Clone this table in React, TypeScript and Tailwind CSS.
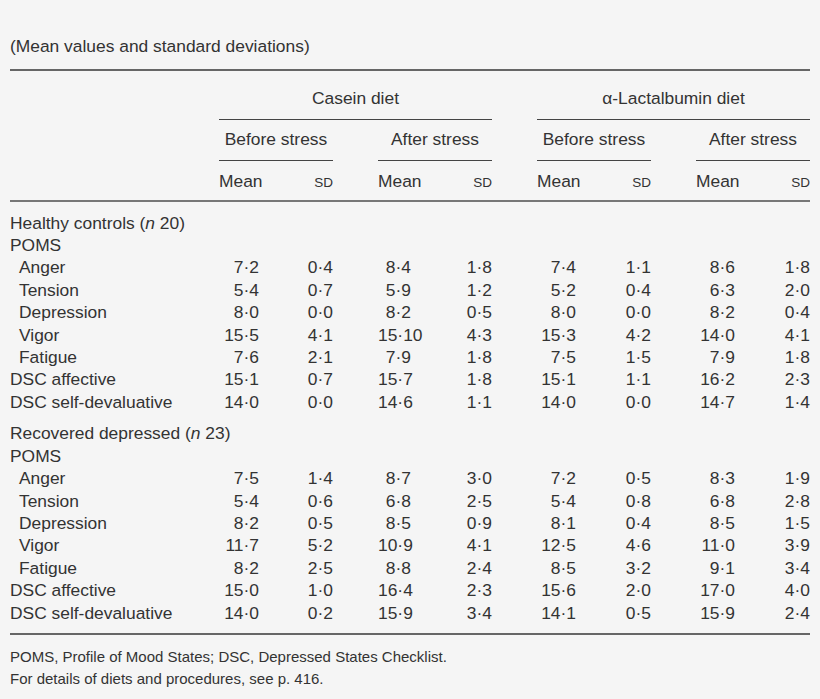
import React from 'react';

type Row = { label: string; indent?: boolean; values?: string[] };

const healthy: Row[] = [
  { label: 'POMS' },
  { label: 'Anger', indent: true, values: ['7·2', '0·4', '8·4', '1·8', '7·4', '1·1', '8·6', '1·8'] },
  { label: 'Tension', indent: true, values: ['5·4', '0·7', '5·9', '1·2', '5·2', '0·4', '6·3', '2·0'] },
  { label: 'Depression', indent: true, values: ['8·0', '0·0', '8·2', '0·5', '8·0', '0·0', '8·2', '0·4'] },
  { label: 'Vigor', indent: true, values: ['15·5', '4·1', '15·10', '4·3', '15·3', '4·2', '14·0', '4·1'] },
  { label: 'Fatigue', indent: true, values: ['7·6', '2·1', '7·9', '1·8', '7·5', '1·5', '7·9', '1·8'] },
  { label: 'DSC affective', values: ['15·1', '0·7', '15·7', '1·8', '15·1', '1·1', '16·2', '2·3'] },
  { label: 'DSC self-devaluative', values: ['14·0', '0·0', '14·6', '1·1', '14·0', '0·0', '14·7', '1·4'] },
];

const recovered: Row[] = [
  { label: 'POMS' },
  { label: 'Anger', indent: true, values: ['7·5', '1·4', '8·7', '3·0', '7·2', '0·5', '8·3', '1·9'] },
  { label: 'Tension', indent: true, values: ['5·4', '0·6', '6·8', '2·5', '5·4', '0·8', '6·8', '2·8'] },
  { label: 'Depression', indent: true, values: ['8·2', '0·5', '8·5', '0·9', '8·1', '0·4', '8·5', '1·5'] },
  { label: 'Vigor', indent: true, values: ['11·7', '5·2', '10·9', '4·1', '12·5', '4·6', '11·0', '3·9'] },
  { label: 'Fatigue', indent: true, values: ['8·2', '2·5', '8·8', '2·4', '8·5', '3·2', '9·1', '3·4'] },
  { label: 'DSC affective', values: ['15·0', '1·0', '16·4', '2·3', '15·6', '2·0', '17·0', '4·0'] },
  { label: 'DSC self-devaluative', values: ['14·0', '0·2', '15·9', '3·4', '14·1', '0·5', '15·9', '2·4'] },
];

// mean column widths per group (right edge of the mean value inside a 114px group)
const meanW = ['w-[40px]', 'w-[33px]', 'w-[39px]', 'w-[39px]'];
const groupGap = ['', 'ml-[45px]', 'ml-[45px]', 'ml-[45px]'];

const Values: React.FC<{ values: string[] }> = ({ values }) => (
  <>
    {[0, 1, 2, 3].map((g) => {
      const mean = values[g * 2];
      const sd = values[g * 2 + 1];
      const wide = mean === '15·10';
      return (
        <div key={g} className={`flex w-[114px] ${groupGap[g]}`}>
          <div className={`${meanW[g]} text-right whitespace-nowrap`}>
            <span className={wide ? 'mr-[-9px]' : ''}>{mean}</span>
          </div>
          <div className="flex-1 text-right">{sd}</div>
        </div>
      );
    })}
  </>
);

const Section: React.FC<{ title: string; n: string; rows: Row[] }> = ({ title, n, rows }) => (
  <div>
    <div>
      {title} (<i>n</i> {n})
    </div>
    {rows.map((r) => (
      <div key={r.label} className="flex">
        <div className={`w-[209px] ${r.indent ? 'pl-[9px]' : ''}`}>{r.label}</div>
        {r.values && <Values values={r.values} />}
      </div>
    ))}
  </div>
);

export default function App() {
  return (
    <div className="w-[820px] h-[699px] bg-[#f5f5f5] text-[#333] px-[10px] pt-[35px] font-['Liberation_Sans',Arial,sans-serif] text-[17.4px] leading-[22.4px]">
      <div>(Mean values and standard deviations)</div>
      <div className="mt-[12px] border-t-2 border-[#666]" />

      {/* header */}
      <div className="flex pt-[16px]">
        <div className="w-[209px]" />
        <div className="w-[273px] text-center">Casein diet</div>
        <div className="w-[273px] ml-[45px] text-center">α-Lactalbumin diet</div>
      </div>
      <div className="flex mt-[9px]">
        <div className="w-[209px]" />
        <div className="w-[273px] border-t border-[#444]" />
        <div className="w-[273px] ml-[45px] border-t border-[#444]" />
      </div>
      <div className="flex mt-[8px]">
        <div className="w-[209px]" />
        {['Before stress', 'After stress', 'Before stress', 'After stress'].map((t, i) => (
          <div key={i} className={`w-[114px] ${groupGap[i]}`}>
            <div className="text-center whitespace-nowrap">{t}</div>
            <div className="mt-[10px] border-t border-[#444]" />
          </div>
        ))}
      </div>
      <div className="flex mt-[9px]">
        <div className="w-[209px]" />
        {[0, 1, 2, 3].map((i) => (
          <div key={i} className={`flex justify-between items-baseline w-[114px] ${groupGap[i]}`}>
            <span>Mean</span>
            <span className="text-[13.5px]">SD</span>
          </div>
        ))}
      </div>
      <div className="mt-[5px] border-t-2 border-[#777]" />

      {/* body */}
      <div className="pt-[10px]">
        <Section title="Healthy controls" n="20" rows={healthy} />
        <div className="mt-[9px]">
          <Section title="Recovered depressed" n="23" rows={recovered} />
        </div>
      </div>
      <div className="mt-[9px] border-t-2 border-[#666]" />

      <div className="pt-[11px] text-[15px] leading-[22px]">
        <div>POMS, Profile of Mood States; DSC, Depressed States Checklist.</div>
        <div>For details of diets and procedures, see p. 416.</div>
      </div>
    </div>
  );
}
